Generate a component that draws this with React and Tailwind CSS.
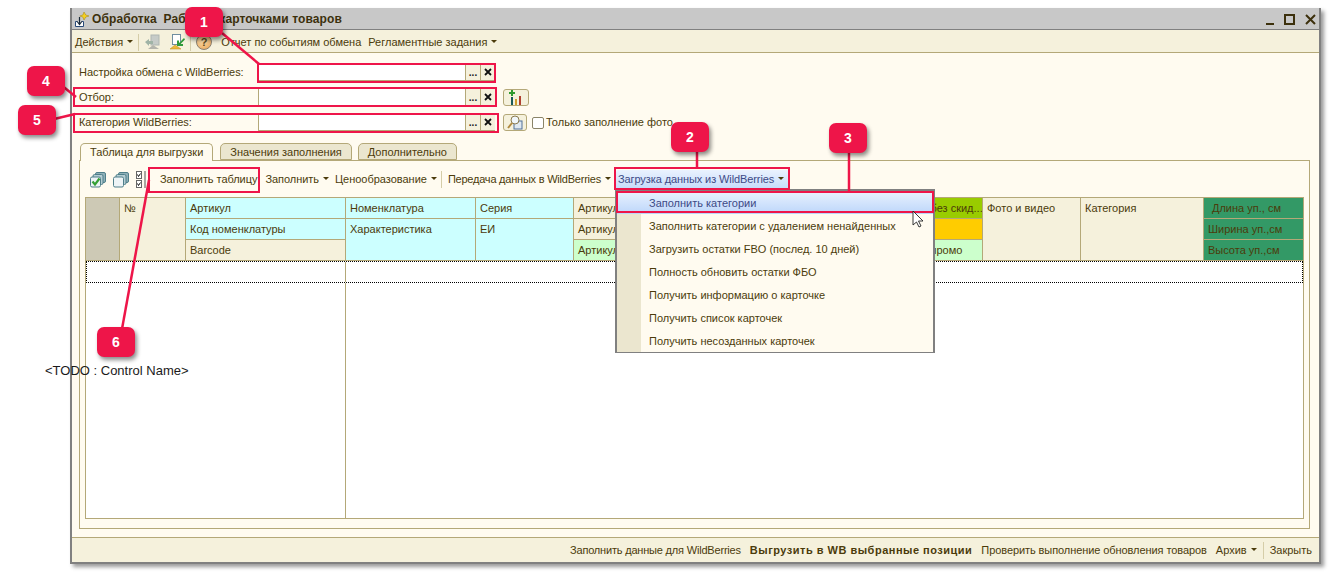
import React from "react";

const ff = "[font-family:'Liberation_Sans',Arial,sans-serif]";

function Arrow() {
  return <span className="inline-block ml-1 mb-[2px] w-0 h-0 border-x-[3px] border-x-transparent border-t-[3px] border-t-[#4b3b0b]" />;
}

function Field({ label }) {
  return (
    <div className="flex items-center h-[17px]">
      <span className="w-[179px] shrink-0 truncate tracking-[-0.05px]">{label}</span>
      <div className="flex w-[237px] h-[17px] border-b border-[#b4a878] bg-white">
        <div className="flex-1 border-l border-[#b4a878]" />
        <div className="w-[15px] bg-[#f5f1dc] border-l border-[#b4a878] text-center leading-[17px] font-bold text-[10px] text-[#222]">...</div>
        <div className="w-[15px] bg-[#f5f1dc] border-l border-[#b4a878] flex items-center justify-center">
          <svg width="8" height="8" viewBox="0 0 8 8"><path d="M1 1l6 6M7 1l-6 6" stroke="#111" strokeWidth="1.8" /></svg>
        </div>
      </div>
    </div>
  );
}

function Cell({ children, bg = "bg-[#f5f1dc]", h = "h-[21px]", extra = "px-[4px]" }) {
  return <div className={`${h} ${bg} ${extra} border-b border-r border-[#b4a878] pt-[4px] whitespace-nowrap overflow-hidden`}>{children}</div>;
}

const menuItems = [
  "Заполнить категории",
  "Заполнить категории с удалением ненайденных",
  "Загрузить остатки FBO (послед. 10 дней)",
  "Полность обновить остатки ФБО",
  "Получить информацию о карточке",
  "Получить список карточек",
  "Получить несозданных карточек",
];

function Badge({ n, className }) {
  return (
    <div className={`absolute w-[38px] h-[30px] rounded-[7px] bg-[#ee1549] text-white font-bold text-[14px] flex items-center justify-center shadow-[2px_3px_4px_rgba(0,0,0,0.45)] ${className}`}>
      {n}
    </div>
  );
}

function Frame({ className }) {
  return <div className={`absolute border-2 border-[#ee1549] ${className}`} />;
}

function StackIcon({ check, className = "" }) {
  return (
    <svg width="16" height="16" viewBox="0 0 16 16" className={className}>
      <rect x="5.500" y="0.500" width="10" height="10" rx="1.500" fill="#8fb0b8" stroke="#4f7f8a" />
      <rect x="3" y="2.500" width="10" height="10" rx="1.500" fill="#b5cdd3" stroke="#4f7f8a" />
      <rect x="0.500" y="5" width="10" height="10" rx="1.500" fill="#eef4f6" stroke="#4f7f8a" />
      {check && <path d="M2.500 9.500l2.500 3 4.500-6" stroke="#35a035" strokeWidth="2.200" fill="none" />}
    </svg>
  );
}

export default function App() {
  return (
    <div className={`relative w-[1333px] h-[573px] overflow-hidden bg-white text-[11px] leading-[13px] text-[#4b3b0b] ${ff}`}>
      <div className="pl-[70px] pt-[8px]">
        {/* window */}
        <div className="flex flex-col w-[1251px] h-[556px] border-r-2 border-b-2 border-l-2 border-[#808080] bg-[#fffbf0] shadow-[3px_3px_4px_rgba(0,0,0,0.4)]">
          <div className="flex items-center h-[22px] shrink-0 bg-[#c8c8c8] pl-[2px] pr-[3px] pt-[2px] border-b border-[#808080]">
            <svg width="16" height="16" viewBox="0 0 16 16" className="mr-[2px]">
              <path d="M10 0l1.800 3 3.200 1-3.200 1-1.800 3-1.200-3-3-1 3-1z" fill="#f5d020" stroke="#a08010" strokeWidth="0.5" />
              <path d="M1.500 9.500h2M7.500 9.500h2v5h-8v-5" fill="#fff" stroke="#2a4a78" />
              <path d="M5.500 5v7M3.200 9.500l2.300 3 2.300-3" stroke="#1a2a3a" strokeWidth="1.200" fill="none" />
            </svg>
            <span className="font-bold text-[12px] tracking-[0.1px] text-[#3c300c] whitespace-pre">Обработка  Работа с карточками товаров</span>
            <div className="flex-1" />
            <div className="flex items-center">
              <div className="w-[8px] h-[2px] mt-[8px] bg-[#3c300c]" />
              <div className="w-[11px] h-[11px] ml-[10px] border-2 border-[#3c300c]" />
              <svg width="11" height="11" viewBox="0 0 11 11" className="ml-[10px]"><path d="M1 1l9 9M10 1l-9 9" stroke="#3c300c" strokeWidth="2" /></svg>
            </div>
          </div>

          <div className="flex items-center h-[23px] shrink-0 bg-[#f5f1dc] border-b border-[#b4a878] pl-[3px] pt-[2px]">
            <span>Действия</span><Arrow />
            <div className="w-px h-[17px] bg-[#d5cda8] ml-[5px] mr-[6px]" />
            <svg width="16" height="16" viewBox="0 0 16 16">
              <rect x="6" y="1" width="8" height="10" fill="#c6cbc8" stroke="#aeb6b2" />
              <path d="M0 8l4-3v2h4v3H4v2z" fill="#9fb3a6" />
              <path d="M3 15l5-4 6 4z" fill="#b4b4ac" />
            </svg>
            <svg width="16" height="16" viewBox="0 0 16 16" className="ml-[8px]">
              <rect x="3.500" y="0.500" width="8" height="10" fill="#fff" stroke="#6f8ea0" />
              <path d="M15 4l-5 5V6.500H8V12h6v-2h-2.500L16 5.500z" fill="#2f9a3a" />
              <path d="M1 15l5-4 6 4z" fill="#ecb83a" stroke="#b88a20" strokeWidth="0.5" />
            </svg>
            <div className="w-px h-[17px] bg-[#d5cda8] ml-[5px] mr-[5px]" />
            <div className="w-[16px] h-[16px] rounded-full bg-[radial-gradient(circle_at_40%_35%,#fbe0b0,#e8a050)] border border-[#8a8070] text-center text-[11px] leading-[14px] font-bold text-[#5b4a20]">?</div>
            <span className="ml-[9px]">Отчет по событиям обмена</span>
            <span className="ml-[7px]">Регламентные задания</span><Arrow />
          </div>

          <div className="flex flex-col flex-1 min-h-0 pl-[7px] pr-[9px]">
            <div className="flex flex-col shrink-0 pt-[11px]">
              <Field label="Настройка обмена с WildBerries:" />
              <div className="flex items-center gap-[8px] mt-[8px]">
                <Field label="Отбор:" />
                <div className="w-[26px] h-[17px] rounded-[3px] border border-[#b4a878] bg-[#f5f1dc] flex items-center justify-center">
                  <svg width="18" height="15" viewBox="0 0 18 15"><path d="M5 0v6M2 3h6" stroke="#2e9a2e" strokeWidth="2" /><rect x="4" y="7" width="2" height="8" fill="#1a5a5a" /><rect x="8" y="9" width="2" height="6" fill="#d0a030" /><rect x="12" y="6" width="2" height="9" fill="#b04030" /></svg>
                </div>
              </div>
              <div className="flex items-center gap-[8px] mt-[8px]">
                <Field label="Категория WildBerries:" />
                <div className="w-[24px] h-[17px] rounded-[3px] border border-[#b4a878] bg-[#f5f1dc] flex items-center justify-center">
                  <svg width="18" height="15" viewBox="0 0 18 15"><rect x="8" y="6" width="8" height="8" fill="#dfe8f0" stroke="#50709a" /><circle cx="9" cy="5" r="4" fill="#f0f6fa" stroke="#8a7a50" /><path d="M6 8l-4 5" stroke="#b08a40" strokeWidth="2" /></svg>
                </div>
                <div className="flex items-center -ml-[3px]">
                  <div className="w-[12px] h-[12px] rounded-[2px] border border-[#8a8468] bg-white" />
                  <span className="ml-[2px]">Только заполнение фото</span>
                </div>
              </div>
            </div>

            {/* tabs */}
            <div className="flex items-end h-[17px] mt-[12px] ml-[1px] shrink-0 relative z-10">
              <div className="h-[18px] px-[9px] pt-[2px] -mb-px rounded-t-[5px] border border-b-0 border-[#b4a878] bg-[#fffbf0]">Таблица для выгрузки</div>
              <div className="h-[17px] ml-[7px] px-[9px] pt-[2px] rounded-t-[5px] border border-[#b4a878] bg-[#ebe6cf]">Значения заполнения</div>
              <div className="h-[17px] ml-[6px] px-[9px] pt-[2px] rounded-t-[5px] border border-[#b4a878] bg-[#ebe6cf]">Дополнительно</div>
            </div>

            <div className="flex flex-col h-[369px] shrink-0 border border-[#b4a878] px-[5px] pb-[9px]">
              {/* panel toolbar */}
              <div className="flex items-center h-[36px] shrink-0 pl-[5px] pt-[1px]">
                <StackIcon check />
                <StackIcon className="ml-[7px]" />
                <svg width="11" height="17" viewBox="0 0 11 17" className="ml-[7px]">
                  <rect x="0.500" y="0.500" width="5" height="7" fill="#fff" stroke="#666" />
                  <rect x="0.500" y="9.500" width="5" height="7" fill="#fff" stroke="#666" />
                  <path d="M1.500 3.500l1 2 2-3M1.500 12.500l1 2 2-3" stroke="#111" fill="none" />
                  <rect x="8" y="0" width="2" height="17" fill="#a8a8a0" />
                </svg>
                <span className="ml-[13px] tracking-[-0.05px]">Заполнить таблицу</span>
                <span className="ml-[8px] tracking-[-0.05px]">Заполнить</span><Arrow />
                <span className="ml-[6px] tracking-[-0.02px]">Ценообразование</span><Arrow />
                <div className="w-px h-[17px] bg-[#d5cda8] ml-[4px] mr-[6px]" />
                <span className="tracking-[-0.22px]">Передача данных в WildBerries</span><Arrow />
                <div className="flex items-center ml-[5px] h-[20px] w-[173px] pl-[2px] rounded-[2px] bg-gradient-to-b from-[#eaf2fe] to-[#c3dafa] text-[#3d4a86] tracking-[-0.1px]">
                  Загрузка данных из WildBerries<Arrow />
                </div>
              </div>

              {/* table */}
              <div className="flex flex-col flex-1 min-h-0 border border-[#b4a878] bg-white">
                <div className="flex h-[63px] shrink-0">
                  <div className="w-[34px] bg-[#cdc9b5] border-r border-b border-[#b4a878]" />
                  <Cell h="h-[63px]" extra="w-[66px] px-[4px]">№</Cell>
                  <div className="w-[160px]">
                    <Cell bg="bg-[#ccffff]">Артикул</Cell>
                    <Cell bg="bg-[#ccffff]">Код номенклатуры</Cell>
                    <Cell>Barcode</Cell>
                  </div>
                  <div className="w-[130px]">
                    <Cell bg="bg-[#ccffff]">Номенклатура</Cell>
                    <Cell bg="bg-[#ccffff]" h="h-[42px]">Характеристика</Cell>
                  </div>
                  <div className="w-[98px]">
                    <Cell bg="bg-[#ccffff]">Серия</Cell>
                    <Cell bg="bg-[#ccffff]" h="h-[42px]">ЕИ</Cell>
                  </div>
                  <div className="w-[327px]">
                    <Cell>Артикул</Cell>
                    <Cell>Артикул</Cell>
                    <Cell bg="bg-[#ccffcc]">Артикул</Cell>
                  </div>
                  <div className="w-[82px]">
                    <Cell bg="bg-[#99cc00]" extra="pl-0">Цена без скид...</Cell>
                    <Cell bg="bg-[#ffcc00]" />
                    <Cell bg="bg-[#ccffcc]" extra="pl-0">Цена промо</Cell>
                  </div>
                  <Cell h="h-[63px]" extra="w-[98px] px-[4px]">Фото и видео</Cell>
                  <Cell h="h-[63px]" extra="w-[123px] px-[4px]">Категория</Cell>
                  <div className="flex-1 min-w-0">
                    <Cell bg="bg-[#339966]" extra="pl-[8px] border-r-0">Длина уп., см</Cell>
                    <Cell bg="bg-[#339966]" extra="px-[4px] border-r-0">Ширина уп.,см</Cell>
                    <Cell bg="bg-[#339966]" extra="px-[4px] border-r-0">Высота уп.,см</Cell>
                  </div>
                </div>
                <div className="flex h-[22px] shrink-0 border border-dotted border-black">
                  <div className="w-[259px] border-r border-[#b4a878]" />
                </div>
                <div className="flex flex-1 min-h-0">
                  <div className="w-[260px] border-r border-[#b4a878]" />
                </div>
              </div>
            </div>
          </div>

          {/* bottom bar */}
          <div className="flex items-center justify-end h-[25px] shrink-0 mt-auto bg-[#f5f1dc] border-t border-[#b4a878] pr-[7px]">
            <span className="tracking-[-0.19px]">Заполнить данные для WildBerries</span>
            <span className="ml-[9px] font-bold tracking-[0.5px]">Выгрузить в WB выбранные позиции</span>
            <span className="ml-[9px] tracking-[-0.08px]">Проверить выполнение обновления товаров</span>
            <span className="ml-[9px]">Архив</span><Arrow />
            <div className="w-px h-[17px] bg-[#d5cda8] mx-[6px]" />
            <span>Закрыть</span>
          </div>
        </div>
      </div>

      {/* dropdown */}
      <div className="absolute left-[615px] top-[189px] w-[320px] border-x-2 border-t-2 border-b border-[#808080] bg-[#fffbf0] flex flex-col z-20">
        {menuItems.map((item, i) => (
          <div key={item} className={`flex h-[23px] shrink-0 items-center ${i === 0 ? "bg-gradient-to-b from-[#eaf2fe] to-[#bcd6fa] text-[#3d4a86]" : ""}`}>
            <div className={`w-[24px] h-full ${i === 0 ? "" : "bg-[#ebe6cf]"}`} />
            <span className="ml-[8px] pt-[2px]">{item}</span>
          </div>
        ))}
      </div>

      {/* cursor */}
      <svg width="13" height="19" viewBox="0 0 13 19" className="absolute left-[912px] top-[210px] z-40">
        <path d="M1 1v14l3.500-3 2.500 5 2-1-2.500-5h4.500z" fill="#fff" stroke="#222" strokeWidth="0.9" />
      </svg>

      {/* callout lines */}
      <svg width="1333" height="573" className="absolute left-0 top-0 z-30 pointer-events-none">
        <g stroke="#ee1549" strokeWidth="2.500" fill="none">
          <path d="M222 33L259 64" />
          <path d="M697 150V168" />
          <path d="M849 150V192" />
          <path d="M60 84L76 97" />
          <path d="M50 120L75 114" />
          <path d="M149 180L120 340" />
        </g>
      </svg>

      <Frame className="left-[257px] top-[63px] w-[239px] h-[20px] z-30" />
      <Frame className="left-[73px] top-[87px] w-[424px] h-[20px] z-30" />
      <Frame className="left-[73px] top-[113px] w-[426px] h-[20px] z-30" />
      <Frame className="left-[148px] top-[167px] w-[112px] h-[26px] z-30" />
      <Frame className="left-[614px] top-[167px] w-[176px] h-[23px] z-30" />
      <Frame className="left-[616px] top-[191px] w-[318px] h-[22px] z-30" />

      <Badge n="1" className="left-[185px] top-[7px] z-30" />
      <Badge n="2" className="left-[671px] top-[122px] z-30" />
      <Badge n="3" className="left-[829px] top-[123px] z-30" />
      <Badge n="4" className="left-[27px] top-[66px] z-30" />
      <Badge n="5" className="left-[18px] top-[105px] z-30" />
      <Badge n="6" className="left-[97px] top-[327px] z-30" />

      <div className="absolute left-[45px] top-[363px] z-30 text-[13px] leading-[16px] text-[#1a1a1a]">{"<TODO : Control Name>"}</div>
    </div>
  );
}
